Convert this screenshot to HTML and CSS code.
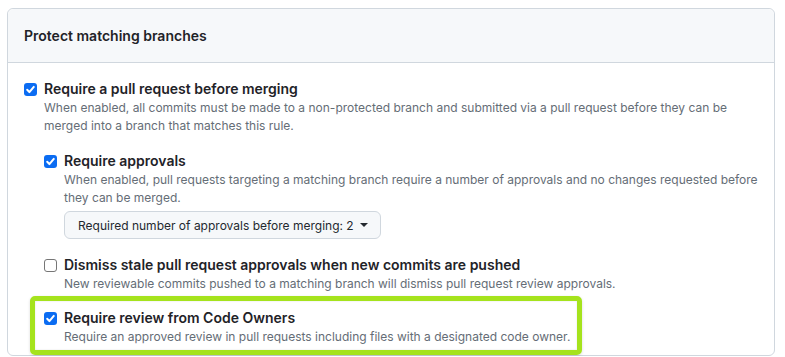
FILE: index.html
```html
<!DOCTYPE html>
<html lang="en">
<head>
    <meta charset="UTF-8">
    <title>Branch protection rule</title>
    <link rel="stylesheet" href="styles.css">
</head>
<body>
    <div class="box">
        <div class="box-header">Protect matching branches</div>
        <div class="box-body">
            <div class="rule">
                <div class="rule-row">
                    <span class="check checked"></span>
                    <span class="rule-title">Require a pull request before merging</span>
                </div>
                <p class="rule-note">When enabled, all commits must be made to a non-protected branch and submitted via a pull request before they can be merged into a branch that matches this rule.</p>

                <div class="sub-rules">
                    <div class="rule">
                        <div class="rule-row">
                            <span class="check checked"></span>
                            <span class="rule-title">Require approvals</span>
                        </div>
                        <p class="rule-note">When enabled, pull requests targeting a matching branch require a number of approvals and no changes requested before they can be merged.</p>
                        <button class="select-btn" type="button">Required number of approvals before merging: 2 <span class="caret"></span></button>
                    </div>

                    <div class="rule">
                        <div class="rule-row">
                            <span class="check"></span>
                            <span class="rule-title">Dismiss stale pull request approvals when new commits are pushed</span>
                        </div>
                        <p class="rule-note">New reviewable commits pushed to a matching branch will dismiss pull request review approvals.</p>
                    </div>

                    <div class="rule highlight">
                        <div class="rule-row">
                            <span class="check checked"></span>
                            <span class="rule-title">Require review from Code Owners</span>
                        </div>
                        <p class="rule-note">Require an approved review in pull requests including files with a designated code owner.</p>
                    </div>
                </div>
            </div>
        </div>
    </div>
</body>
</html>
```

FILE: styles.css
```css
html { box-sizing: border-box; }
*, *::before, *::after { box-sizing: inherit; }
body {
    margin: 0;
    padding: 8px 10px 0 7px;
    background: #fff;
    font-family: Inter, 'Liberation Sans', Arial, sans-serif;
    color: #1f2328;
    overflow: hidden;
}
.box {
    border: 1px solid #d0d7de;
    border-radius: 6px;
    background: #fff;
}
.box-header {
    background: #f6f8fa;
    border-bottom: 1px solid #d0d7de;
    border-radius: 6px 6px 0 0;
    padding: 16px 16px;
    font-size: 14px;
    line-height: 21px;
    font-weight: 600;
}
.box-body {
    padding: 16px 16px 0 16px;
}
.rule-row {
    display: flex;
    align-items: flex-start;
    line-height: 20px;
}
.rule-title {
    font-size: 14px;
    font-weight: 600;
}
.check {
    flex: none;
    width: 13px;
    height: 13px;
    margin: 4px 7px 0 0;
    border-radius: 3px;
    border: 1px solid #767676;
    background: #fff;
}
.check.checked {
    border: none;
    background: #0b6cf2 url("data:image/svg+xml,%3Csvg xmlns='http://www.w3.org/2000/svg' viewBox='0 0 13 13'%3E%3Cpath d='M3.2 6.8l2.2 2.3 4.4-5.2' fill='none' stroke='white' stroke-width='2' stroke-linecap='round' stroke-linejoin='round'/%3E%3C/svg%3E") center / 13px 13px no-repeat;
}
.rule-note {
    margin: 0 0 0 20px;
    font-size: 12px;
    line-height: 18px;
    color: #656d76;
}
.sub-rules {
    margin-left: 20px;
}
.sub-rules .rule {
    margin-top: 16px;
}
.select-btn {
    display: inline-flex;
    align-items: center;
    gap: 6px;
    height: 28px;
    margin: 4px 0 0 20px;
    padding: 0 12px 0 13px;
    background: #f6f8fa;
    border: 1px solid #d0d7de;
    border-radius: 6px;
    font-family: inherit;
    font-size: 12px;
    color: #24292f;
}
.caret {
    width: 0;
    height: 0;
    border-left: 4px solid transparent;
    border-right: 4px solid transparent;
    border-top: 4px solid #24292f;
}
.sub-rules .rule.highlight {
    margin: 3px 0 0 -14px;
    width: 552px;
    padding: 7px 0 4px 9px;
    border: 5px solid #a5e31d;
    border-radius: 5px;
    box-shadow: 0 1px 3px rgba(0, 0, 0, 0.15), inset 0 0 2px rgba(0, 0, 0, 0.12);
}
```
